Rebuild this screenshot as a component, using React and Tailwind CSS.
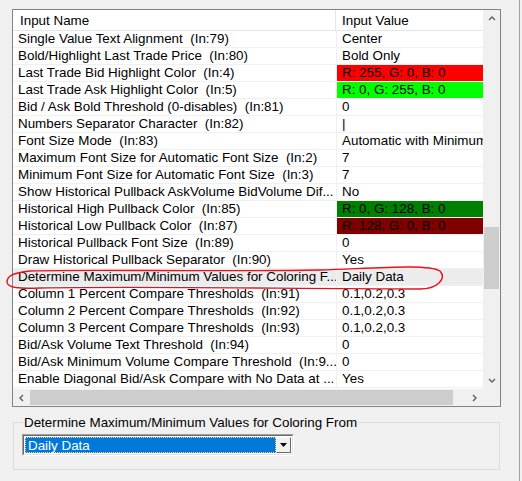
const rows = [
  ['Single Value Text Alignment  (In:79)', 'Center'],
  ['Bold/Highlight Last Trade Price  (In:80)', 'Bold Only'],
  ['Last Trade Bid Highlight Color  (In:4)', 'R: 255, G: 0, B: 0', 'bg-[#ff0000]'],
  ['Last Trade Ask Highlight Color  (In:5)', 'R: 0, G: 255, B: 0', 'bg-[#00ff00]'],
  ['Bid / Ask Bold Threshold (0-disables)  (In:81)', '0'],
  ['Numbers Separator Character  (In:82)', '|'],
  ['Font Size Mode  (In:83)', 'Automatic with Minimum'],
  ['Maximum Font Size for Automatic Font Size  (In:2)', '7'],
  ['Minimum Font Size for Automatic Font Size  (In:3)', '7'],
  ['Show Historical Pullback AskVolume BidVolume Dif...', 'No'],
  ['Historical High Pullback Color  (In:85)', 'R: 0, G: 128, B: 0', 'bg-[#008000]'],
  ['Historical Low Pullback Color  (In:87)', 'R: 128, G: 0, B: 0', 'bg-[#800000]'],
  ['Historical Pullback Font Size  (In:89)', '0'],
  ['Draw Historical Pullback Separator  (In:90)', 'Yes'],
  ['Determine Maximum/Minimum Values for Coloring F...', 'Daily Data', null, true],
  ['Column 1 Percent Compare Thresholds  (In:91)', '0.1,0.2,0.3'],
  ['Column 2 Percent Compare Thresholds  (In:92)', '0.1,0.2,0.3'],
  ['Column 3 Percent Compare Thresholds  (In:93)', '0.1,0.2,0.3'],
  ['Bid/Ask Volume Text Threshold  (In:94)', '0'],
  ['Bid/Ask Minimum Volume Compare Threshold  (In:9...', '0'],
  ['Enable Diagonal Bid/Ask Compare with No Data at ...', 'Yes'],
];

function Chevron({ dir }) {
  const d = {
    up: 'M1 5 L4 2 L7 5',
    down: 'M1 2 L4 5 L7 2',
    left: 'M5 1 L2 4 L5 7',
    right: 'M2 1 L5 4 L2 7',
  }[dir];
  return (
    <svg width="8" height="8" viewBox="0 0 8 8">
      <path d={d} fill="none" stroke="#606060" strokeWidth="1.4" />
    </svg>
  );
}

export default function App() {
  return (
    <div
      className="relative flex h-[481px] w-[522px] overflow-hidden bg-[#f0f0f0] text-[13.4px] leading-[15px] text-black"
      style={{ fontFamily: '"Liberation Sans", Arial, sans-serif' }}
    >
      <div className="w-[519px] pl-[12px] pt-[9px]">
        {/* list view */}
        <div className="flex h-[398px] w-[489px] flex-col border border-[#828282] bg-white">
          <div className="flex flex-1">
            <div className="flex w-[470px] flex-col">
              <div className="flex h-[21px] border-b border-[#e5e5e5]">
                <div className="flex w-[323px] items-center border-r border-[#e5e5e5] pl-[7px]">Input Name</div>
                <div className="flex items-center pl-[6px]">Input Value</div>
              </div>
              {rows.map(([name, value, color, selected]) => (
                <div
                  key={name}
                  className={`flex h-[17px] border-b border-[#f0f0f0] ${selected ? 'bg-[#ececec]' : ''}`}
                >
                  <div className="w-[324px] overflow-hidden whitespace-pre border-r border-[#f0f0f0] pl-[5px] leading-[16px]">
                    {name}
                  </div>
                  <div
                    className={`flex-1 overflow-hidden whitespace-pre pl-[5px] leading-[16px] ${color ?? ''}`}
                  >
                    {value}
                  </div>
                </div>
              ))}
            </div>
            {/* vertical scrollbar */}
            <div className="flex w-[17px] flex-col bg-[#f0f0f0]">
              <div className="flex h-[17px] items-center justify-center">
                <Chevron dir="up" />
              </div>
              <div className="h-[200px]" />
              <div className="mx-[1px] h-[62px] bg-[#cdcdcd]" />
              <div className="flex-1" />
              <div className="flex h-[17px] items-center justify-center">
                <Chevron dir="down" />
              </div>
            </div>
          </div>
          {/* horizontal scrollbar */}
          <div className="flex h-[17px] bg-[#f0f0f0]">
            <div className="flex w-[17px] items-center justify-center">
              <Chevron dir="left" />
            </div>
            <div className="my-[1px] w-[423px] bg-[#cdcdcd]" />
            <div className="w-[13px]" />
            <div className="flex w-[17px] items-center justify-center">
              <Chevron dir="right" />
            </div>
            <div className="flex-1" />
          </div>
        </div>

        {/* group box */}
        <fieldset className="ml-[1px] mt-[8px] h-[55px] w-[487px] border border-[#dcdcdc] px-[8px]">
          <legend className="ml-[1px] px-[1px] leading-[15px]">Determine Maximum/Minimum Values for Coloring From</legend>
          <div className="mt-[4px] flex h-[22px] w-[272px] border border-t-[#a0a0a0] border-l-[#a0a0a0] border-r-white border-b-white">
            <div className="flex flex-1 border border-t-[#696969] border-l-[#696969] border-r-[#e3e3e3] border-b-[#e3e3e3] bg-white p-[1px]">
              <div className="flex flex-1 items-center border border-dotted border-[#ffd27f] bg-[#0078d7] pl-[2px] text-white">
                Daily Data
              </div>
              <div className="flex w-[15px] items-center justify-center border border-t-white border-l-white border-r-[#696969] border-b-[#696969] bg-[#f0f0f0]">
                <svg width="7" height="4" viewBox="0 0 7 4">
                  <path d="M0 0 H7 L3.5 4 Z" fill="#000" />
                </svg>
              </div>
            </div>
          </div>
        </fieldset>
      </div>
      <div className="w-px bg-[#a0a0a0]" />

      {/* hand drawn annotation */}
      <svg className="pointer-events-none absolute left-0 top-0" width="522" height="481">
        <path
          d="M30 271 C 90 269, 200 272, 320 270 C 380 268, 428 264, 440 271 C 447 279, 437 289, 420 289 C 300 289, 150 286, 40 288 C 20 289, 6 288, 7 281 C 8 276, 12 273, 30 271"
          fill="none"
          stroke="#e8101c"
          strokeWidth="1.4"
        />
      </svg>
    </div>
  );
}
